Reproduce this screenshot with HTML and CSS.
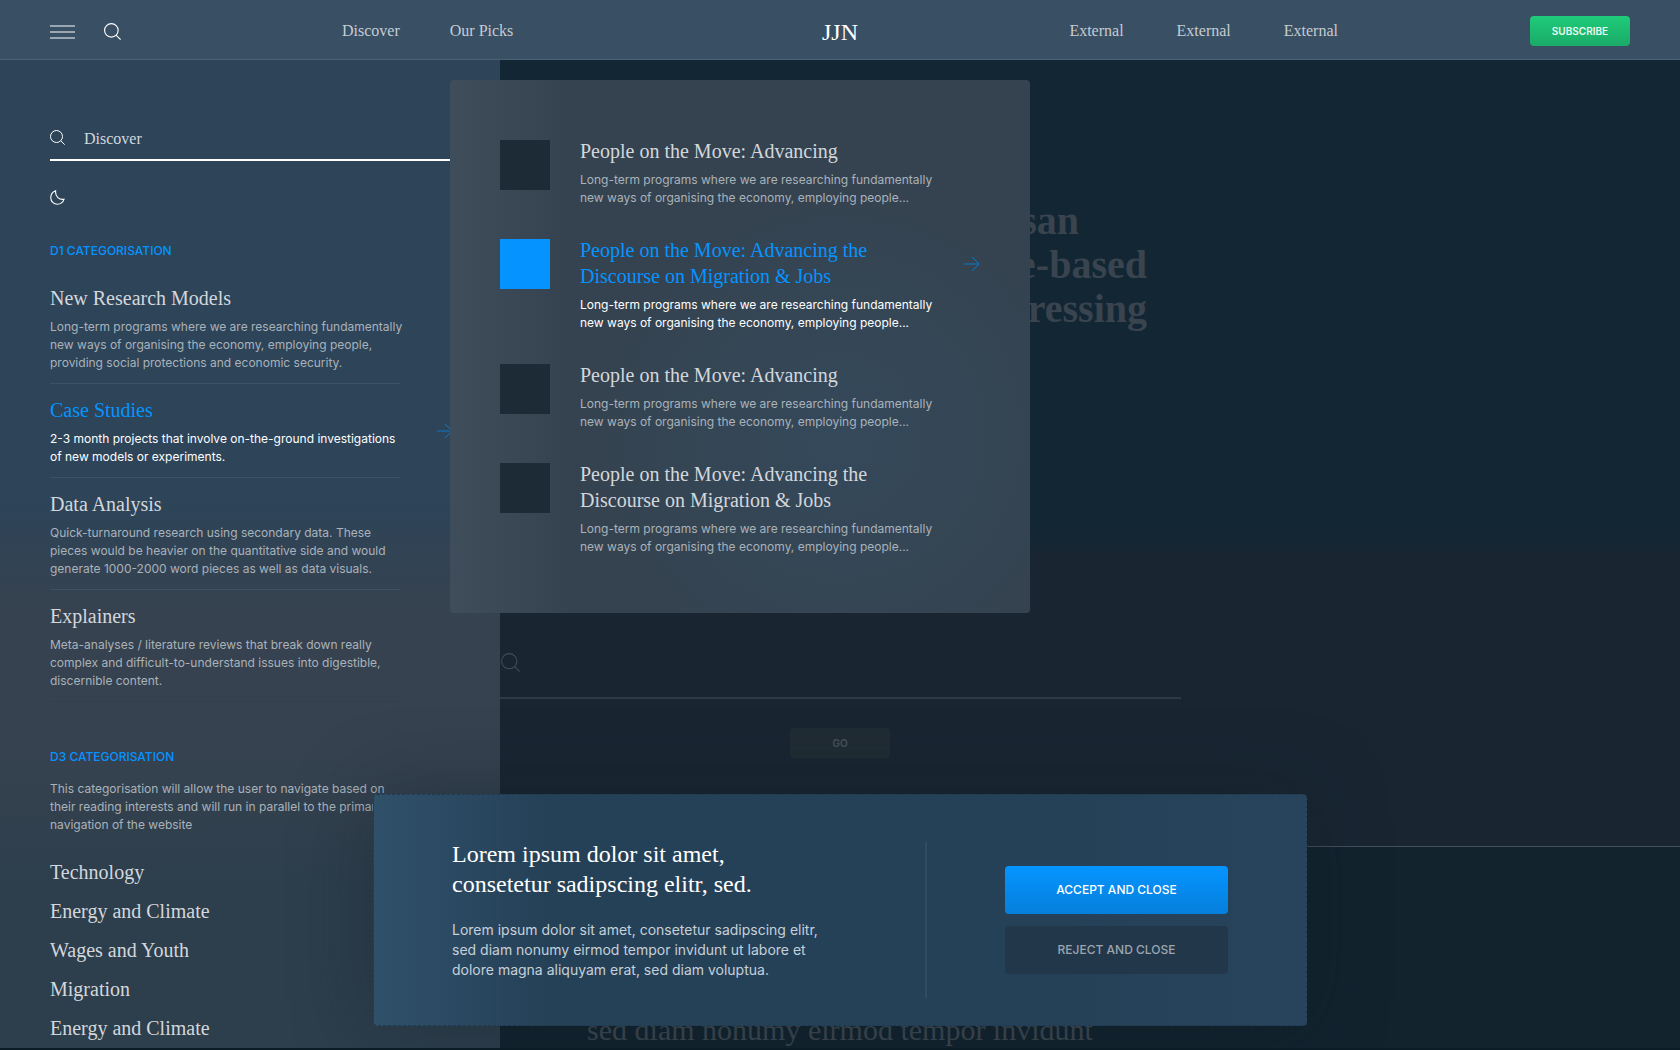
FILE: index.html
```html
<!DOCTYPE html>
<html lang="en">
<head>
<meta charset="utf-8">
<meta name="viewport" content="width=device-width, initial-scale=1">
<title>JJN</title>
<link rel="stylesheet" href="styles.css">
</head>
<body>
<svg class="sprite" aria-hidden="true">
  <symbol id="icon-search" viewBox="0 0 18 18"><circle cx="7.8" cy="7.8" r="7.2"/><path d="M13 13l4.6 4.6"/></symbol>
  <symbol id="icon-arrow" viewBox="0 0 16 16"><path d="M0 8h15M8 1l7 7-7 7"/></symbol>
  <symbol id="icon-moon" viewBox="0 0 16 16"><path d="M6 .8C2.800 2 .8 4.800 .8 8.200c0 4 3.200 7 7 7 3.500 0 6.200-2.200 7.200-5.400-4.800 1-9.800-2.600-9-9z"/></symbol>
</svg>

<header class="topbar">
  <div class="tools">
    <button class="icon-button menu-button" aria-label="Menu"><span></span><span></span><span></span></button>
    <button class="icon-button" aria-label="Search"><svg class="icon icon-md"><use href="#icon-search"/></svg></button>
  </div>
  <nav class="nav" aria-label="Sections">
    <a href="#discover">Discover</a>
    <a href="#picks">Our Picks</a>
  </nav>
  <a class="logo" href="#home">JJN</a>
  <nav class="nav nav-end" aria-label="External">
    <a href="#external-1">External</a>
    <a href="#external-2">External</a>
    <a href="#external-3">External</a>
  </nav>
  <button class="subscribe">SUBSCRIBE</button>
</header>

<div class="stage">
  <main>
    <section class="hero">
      <h1><span class="short">non-partisan</span><span>evidence-based</span><span>addressing</span></h1>
      <form class="hero-form">
        <label class="hero-search">
          <svg class="icon icon-lg" aria-hidden="true"><use href="#icon-search"/></svg>
          <input type="search" aria-label="Search the site">
        </label>
        <button class="go" type="button">GO</button>
      </form>
    </section>
    <section class="intro">
      <p>Lorem ipsum dolor sit amet, consetetur<br>sed diam nonumy eirmod tempor invidunt</p>
    </section>
  </main>

  <aside class="drawer">
    <label class="drawer-search">
      <svg class="icon icon-sm" aria-hidden="true"><use href="#icon-search"/></svg>
      <input type="text" value="Discover" aria-label="Search topics">
    </label>
    <button class="icon-button theme" aria-label="Dark mode"><svg class="icon icon-moon"><use href="#icon-moon"/></svg></button>

    <h2 class="label">D1 CATEGORISATION</h2>
    <ul class="categories">
      <li><h3 class="title"><a href="#models">New Research Models</a></h3><p class="copy">Long-term programs where we are researching fundamentally new ways of organising the economy, employing people, providing social protections and economic security.</p></li>
      <li class="active"><h3 class="title"><a href="#cases">Case Studies</a></h3><p class="copy">2-3 month projects that involve on-the-ground investigations of new models or experiments.</p><svg class="icon arrow" aria-hidden="true"><use href="#icon-arrow"/></svg></li>
      <li><h3 class="title"><a href="#data">Data Analysis</a></h3><p class="copy">Quick-turnaround research using secondary data. These pieces would be heavier on the quantitative side and would generate 1000-2000 word pieces as well as data visuals.</p></li>
      <li><h3 class="title"><a href="#explainers">Explainers</a></h3><p class="copy">Meta-analyses / literature reviews that break down really complex and difficult-to-understand issues into digestible, discernible content.</p></li>
    </ul>

    <h2 class="label label-second">D3 CATEGORISATION</h2>
    <p class="copy note">This categorisation will allow the user to navigate based on their reading interests and will run in parallel to the primary navigation of the website</p>
    <ul class="topics">
      <li class="title"><a href="#technology">Technology</a></li>
      <li class="title"><a href="#energy">Energy and Climate</a></li>
      <li class="title"><a href="#wages">Wages and Youth</a></li>
      <li class="title"><a href="#migration">Migration</a></li>
      <li class="title"><a href="#climate">Energy and Climate</a></li>
    </ul>
  </aside>

  <section class="flyout" aria-label="Case Studies">
    <article class="entry">
      <div class="thumb"></div>
      <div class="entry-text"><h3 class="title"><a href="#p1">People on the Move: Advancing</a></h3><p class="copy">Long-term programs where we are researching fundamentally new ways of organising the economy, employing people...</p></div>
    </article>
    <article class="entry active">
      <div class="thumb"></div>
      <div class="entry-text"><h3 class="title"><a href="#p2">People on the Move: Advancing the<br>Discourse on Migration &amp; Jobs</a></h3><p class="copy">Long-term programs where we are researching fundamentally new ways of organising the economy, employing people...</p></div>
      <svg class="icon arrow" aria-hidden="true"><use href="#icon-arrow"/></svg>
    </article>
    <article class="entry">
      <div class="thumb"></div>
      <div class="entry-text"><h3 class="title"><a href="#p3">People on the Move: Advancing</a></h3><p class="copy">Long-term programs where we are researching fundamentally new ways of organising the economy, employing people...</p></div>
    </article>
    <article class="entry">
      <div class="thumb"></div>
      <div class="entry-text"><h3 class="title"><a href="#p4">People on the Move: Advancing the<br>Discourse on Migration &amp; Jobs</a></h3><p class="copy">Long-term programs where we are researching fundamentally new ways of organising the economy, employing people...</p></div>
    </article>
  </section>

  <section class="consent" role="dialog" aria-labelledby="consent-title">
    <div class="consent-text">
      <h2 id="consent-title">Lorem ipsum dolor sit amet,<br>consetetur sadipscing elitr, sed.</h2>
      <p>Lorem ipsum dolor sit amet, consetetur sadipscing elitr, sed diam nonumy eirmod tempor invidunt ut labore et dolore magna aliquyam erat, sed diam voluptua.</p>
    </div>
    <div class="consent-actions">
      <button class="accept">ACCEPT AND CLOSE</button>
      <button class="reject">REJECT AND CLOSE</button>
    </div>
  </section>
</div>
</body>
</html>
```
FILE: styles.css
```css
:root {
  --serif: "Liberation Serif", "Times New Roman", serif;
  --sans: Inter, "Liberation Sans", sans-serif;
  --blue: #0594ff;
  --text: #d3d7dc;
  --muted: #aab2ba;
}

* { box-sizing: border-box; }

body {
  margin: 0;
  background: #0b1c27;
  color: var(--text);
  font-family: var(--sans);
  font-size: 12px;
  line-height: 18px;
  overflow: hidden;
}

h1, h2, h3, p, ul { margin: 0; padding: 0; font-weight: 400; }
ul { list-style: none; }
a { color: inherit; text-decoration: none; }
button { border: 0; padding: 0; font-family: var(--sans); cursor: pointer; }
input { border: 0; padding: 0; background: none; color: inherit; min-width: 0; outline: 0; }

.sprite { display: none; }
.icon { display: block; flex: none; fill: none; stroke: currentColor; stroke-width: 1.2; overflow: visible; }
.icon-sm { width: 15px; height: 15px; }
.icon-md { width: 17px; height: 17px; }
.icon-lg { width: 19px; height: 19px; stroke-width: 1; }
.icon-moon { width: 15px; height: 15px; }
.icon-button { display: block; background: none; color: #fff; }
.arrow { width: 16px; height: 16px; color: #0878c9; stroke-width: 1; }

.topbar {
  display: grid;
  grid-template-columns: 292px 1fr auto 1fr 292px;
  align-items: center;
  height: 60px;
  padding: 0 50px;
  background: #394f63;
  border-bottom: 1px solid #4a6176;
}
.tools { display: flex; align-items: center; gap: 29px; padding-top: 4px; }
.menu-button { display: grid; gap: 4px; }
.menu-button span { width: 25px; height: 2px; background: #9aa6b2; }
.nav { display: flex; gap: 50px; padding-top: 2px; font: 16px/24px var(--serif); color: #c5ccd3; }
.nav-end { justify-content: flex-end; gap: 53px; }
.logo { font: 24px/30px var(--serif); color: #fff; padding-top: 4px; }
.subscribe {
  justify-self: end;
  width: 100px;
  height: 30px;
  margin-top: 3px;
  border-radius: 4px;
  background: linear-gradient(#1fcb7a, #1aab68);
  color: #e9fbf2;
  font-size: 10px;
  font-weight: 600;
}

.stage { position: relative; }

.hero {
  height: 787px;
  padding-top: 139px;
  background: linear-gradient(#132634 0, #132634 470px, #192632 495px, #192632 100%);
  border-bottom: 1px solid #424f5d;
}
.hero h1 {
  width: 614px;
  margin: 0 auto 309px;
  font: 700 40px/44px var(--serif);
  color: #39444f;
  text-align: right;
}
.hero h1 span { display: block; }
.hero h1 .short { padding-right: 68px; }
.hero-form { width: 682px; margin: 0 auto; }
.hero-search {
  display: flex;
  align-items: center;
  gap: 20px;
  height: 59px;
  padding: 0 2px 12px;
  border-bottom: 2px solid #2e3a46;
  color: #414d59;
}
.hero-search input { flex: 1; }
.go {
  display: block;
  width: 100px;
  height: 30px;
  margin: 29px auto 0;
  border-radius: 4px;
  background: #202c34;
  color: #48535b;
  font-size: 10px;
  font-weight: 600;
}
.intro {
  padding-top: 129px;
  background: #12232e;
  color: #3c4751;
  font: 30px/36px var(--serif);
  text-align: center;
}

.drawer {
  position: absolute;
  top: 0;
  left: 0;
  width: 500px;
  padding: 61px 50px 7px;
  background: linear-gradient(#2d4459 0, #2d4459 440px, #36424f 550px, #36424f 690px, #2d3e4c 830px, #2d3e4c 100%);
}
.drawer-search {
  display: flex;
  align-items: center;
  gap: 19px;
  height: 40px;
  margin-right: -50px;
  padding-bottom: 6px;
  border-bottom: 2px solid #fff;
  color: #fff;
}
.drawer-search input { flex: 1; font: 16px/24px var(--serif); color: var(--text); padding-top: 4px; }
.theme { margin: 29px 0 37px; }
.label { font-size: 12px; line-height: 18px; font-weight: 500; color: var(--blue); }
.label-second { margin-top: 46px; }
.title { font: 20px/26px var(--serif); color: var(--text); }
.copy { color: var(--muted); }
.title + .copy { margin-top: 7px; }
.categories { width: 350px; padding-top: 12px; }
.categories li { position: relative; padding: 13px 0 11px; border-bottom: 1px solid #3e5164; }
.categories li:last-child { border-color: #323f4c; }
.categories .copy { margin-right: -8px; }
.categories .arrow { position: absolute; top: 39px; left: 387px; }
.active .title { color: var(--blue); }
.active .copy { color: #fff; }
.note { width: 358px; margin: 14px 0 25px; }
.topics { display: grid; gap: 13px; }

.flyout {
  position: absolute;
  top: 20px;
  left: 450px;
  display: grid;
  gap: 30px;
  width: 580px;
  padding: 58px 50px 57px;
  border-radius: 4px;
  background:
    linear-gradient(90deg, rgba(66, 80, 93, .8), rgba(66, 80, 93, 0) 120px),
    radial-gradient(circle 240px at 390px 355px, #34495b, #354350);
}
.entry { display: grid; grid-template-columns: 50px 1fr 16px; column-gap: 30px; }
.entry .arrow { margin-top: 19px; }
.thumb { width: 50px; height: 50px; margin-top: 2px; background: #1d2b37; }
.active .thumb { background: var(--blue); }

.consent {
  position: absolute;
  top: 734px;
  left: 50%;
  transform: translateX(-50%);
  display: flex;
  justify-content: space-between;
  width: 934px;
  height: 232px;
  padding: 44px 78px 27px;
  border: 1px dashed #203b50;
  border-radius: 4px;
  background:
    linear-gradient(90deg, #30506a, rgba(37, 65, 88, 0) 170px),
    linear-gradient(90deg, #254158 75%, #27445c);
  box-shadow: 0 0 80px rgba(16, 26, 34, .35);
}
.consent-text { width: 380px; }
.consent-text h2 { font: 24px/30px var(--serif); color: #fff; }
.consent-text p { margin-top: 21px; font-size: 14px; line-height: 20px; color: #c6d0d8; }
.consent-actions {
  display: grid;
  align-content: center;
  gap: 12px;
  margin-top: 3px;
  padding-left: 78px;
  border-left: 2px solid #2f4c62;
}
.consent-actions button {
  width: 223px;
  height: 48px;
  padding-bottom: 2px;
  border-radius: 4px;
  font-size: 12px;
  font-weight: 500;
}
.consent-actions .accept { background: linear-gradient(#0595ff, #067fdc); color: #fff; }
.consent-actions .reject { background: #23374b; color: #9ba5af; }
```
